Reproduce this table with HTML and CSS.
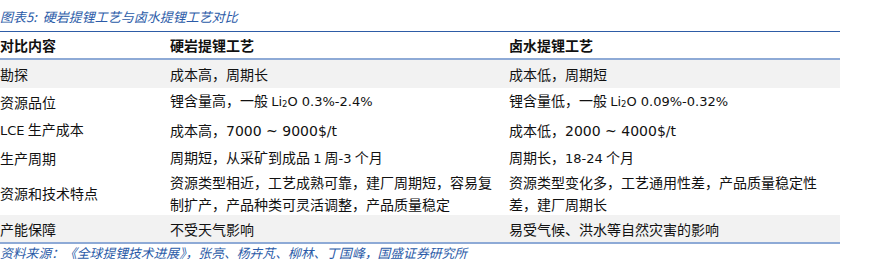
FILE: index.html
```html
<!DOCTYPE html>
<html>
<head>
  <title>硬岩提锂工艺与卤水提锂工艺对比</title>
  <link rel="stylesheet" href="styles.css">
</head>
<body>
  <div class="chart-title">图表5:&nbsp; 硬岩提锂工艺与卤水提锂工艺对比</div>
  <table class="compare">
    <thead>
      <tr>
        <th class="col-label">对比内容</th>
        <th class="col-rock">硬岩提锂工艺</th>
        <th class="col-brine">卤水提锂工艺</th>
      </tr>
    </thead>
    <tbody>
      <tr class="row-shade row-first">
        <td>勘探</td>
        <td>成本高，周期长</td>
        <td>成本低，周期短</td>
      </tr>
      <tr class="row-mid">
        <td>资源品位</td>
        <td class="big">锂含量高，一般 <span class="latin">Li<sub>2</sub>O 0.3%-2.4%</span></td>
        <td class="big">锂含量低，一般 <span class="latin">Li<sub>2</sub>O 0.09%-0.32%</span></td>
      </tr>
      <tr class="row-mid">
        <td><span class="latin">LCE</span> 生产成本</td>
        <td class="bigger">成本高，<span class="latin">7000 ~ 9000$/t</span></td>
        <td class="bigger">成本低，<span class="latin">2000 ~ 4000$/t</span></td>
      </tr>
      <tr>
        <td>生产周期</td>
        <td>周期短，从采矿到成品 <span class="latin">1</span> 周<span class="latin">-3</span> 个月</td>
        <td>周期长，<span class="latin">18-24</span> 个月</td>
      </tr>
      <tr class="row-tall">
        <td>资源和技术特点</td>
        <td class="justify">资源类型相近，工艺成熟可靠，建厂周期短，容易复制扩产，产品种类可灵活调整，产品质量稳定</td>
        <td class="justify wide">资源类型变化多，工艺通用性差，产品质量稳定性差，建厂周期长</td>
      </tr>
      <tr class="row-shade">
        <td>产能保障</td>
        <td>不受天气影响</td>
        <td>易受气候、洪水等自然灾害的影响</td>
      </tr>
    </tbody>
  </table>
  <div class="chart-source">资料来源：《全球提锂技术进展》，张亮、杨卉芃、柳林、丁国峰，国盛证券研究所</div>
</body>
</html>
```

FILE: styles.css
```css
body {
  margin: 0;
  background-color: #fff;
  color: #111;
  font-family: "Noto Sans CJK SC", sans-serif;
}

.chart-title {
  height: 31px;
  padding-top: 9px;
  box-sizing: border-box;
  font-size: 13px;
  line-height: 16px;
  font-style: italic;
  color: #2b5ba8;
}

.compare {
  border-collapse: collapse;
  width: 840px;
  table-layout: fixed;
  border-top: 1.5px solid #2e5ca6;
  border-bottom: 2px solid #8eaad6;
}

.compare th,
.compare td {
  padding: 0 9px 0 0;
  text-align: left;
  vertical-align: middle;
  font-size: 14px;
  line-height: 22px;
}

.compare th {
  height: 26px;
  font-weight: bold;
  border-bottom: 2px solid #8eaad6;
}

.col-label {
  width: 161px;
}

.col-rock {
  width: 330px;
}

.compare td {
  height: 27px;
}

.row-shade td {
  background-color: #f2f2f2;
}

.row-first td,
.row-mid td {
  height: 28px;
}

.row-tall td {
  height: 44px;
}

.latin {
  font-family: "DejaVu Sans", sans-serif;
  font-size: 13px;
}

.latin sub {
  font-size: 8.5px;
  vertical-align: -1px;
}

.big {
  font-size: 15px;
}

.bigger .latin {
  font-size: 14px;
}

.bigger {
  font-size: 15.5px;
}

.justify {
  text-align: justify;
}

.wide {
  font-size: 14.5px;
}

.chart-source {
  padding-top: 2px;
  font-size: 12.8px;
  line-height: 13px;
  font-style: italic;
  color: #2b5ba8;
}
```
